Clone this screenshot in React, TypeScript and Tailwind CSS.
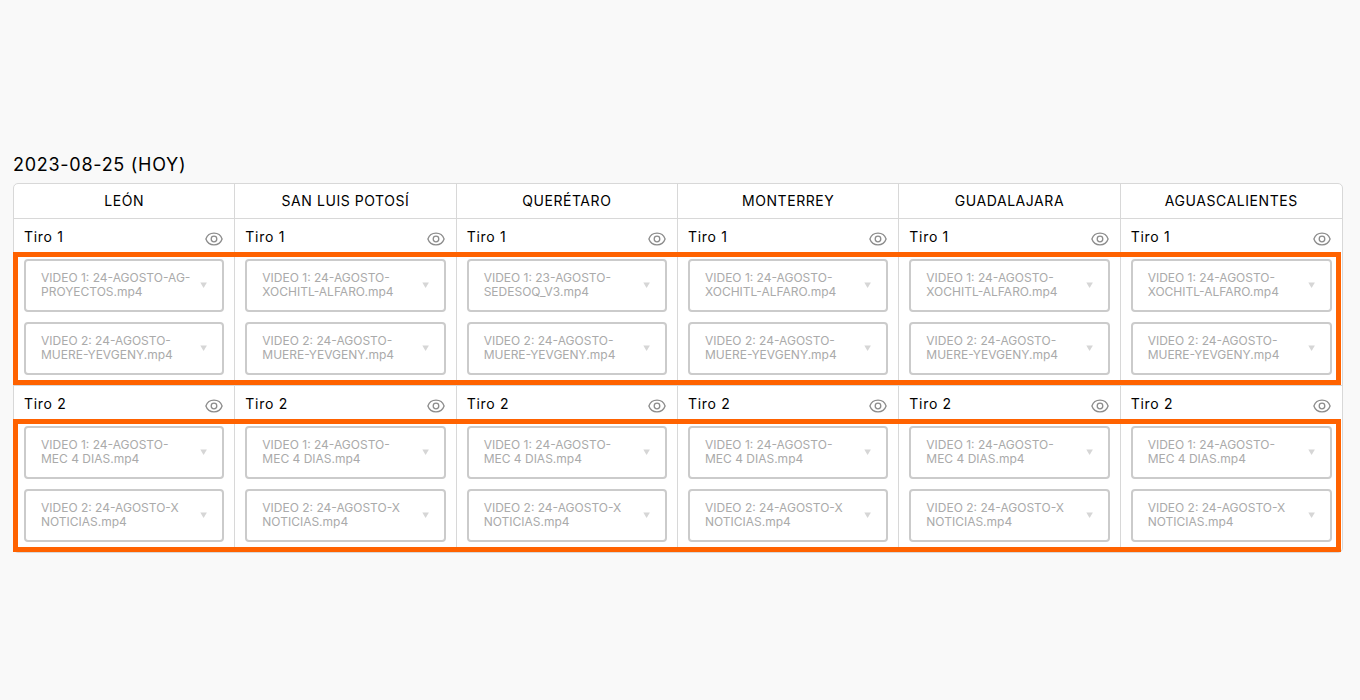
interface Shot {
  name: string;
  videos: string[][];
}

const cities = [
  "LEÓN",
  "SAN LUIS POTOSÍ",
  "QUERÉTARO",
  "MONTERREY",
  "GUADALAJARA",
  "AGUASCALIENTES",
];

const yevgeny = "VIDEO 2: 24-AGOSTO-MUERE-YEVGENY.mp4";
const alfaro = "VIDEO 1: 24-AGOSTO-XOCHITL-ALFARO.mp4";

const shots: Shot[] = [
  {
    name: "Tiro 1",
    videos: [
      ["VIDEO 1: 24-AGOSTO-AG-PROYECTOS.mp4", yevgeny],
      [alfaro, yevgeny],
      ["VIDEO 1: 23-AGOSTO-SEDESOQ_V3.mp4", yevgeny],
      [alfaro, yevgeny],
      [alfaro, yevgeny],
      [alfaro, yevgeny],
    ],
  },
  {
    name: "Tiro 2",
    videos: cities.map(() => [
      "VIDEO 1: 24-AGOSTO-MEC 4 DIAS.mp4",
      "VIDEO 2: 24-AGOSTO-X NOTICIAS.mp4",
    ]),
  },
];

function EyeIcon() {
  return (
    <svg
      className="h-[14px] w-[18px]"
      viewBox="0 0 18 14"
      fill="none"
      stroke="#8c8c8c"
      strokeWidth="1.3"
    >
      <path d="M0.9 7C2.2 3.2 5.2 1.1 9 1.1S15.8 3.2 17.1 7C15.8 10.8 12.8 12.9 9 12.9S2.2 10.8 0.9 7Z" />
      <circle cx="9" cy="7" r="2.8" />
    </svg>
  );
}

function VideoButton({ title }: { title: string }) {
  return (
    <button
      type="button"
      className="flex min-h-[53px] w-full items-center justify-between gap-2 rounded border-2 border-[#cbcbcb] bg-white px-[15px] pb-[2px] text-left text-xs leading-[14px] text-[#aaaaaa]"
    >
      <span>{title}</span>
      <svg className="h-[6px] w-[7px] shrink-0" viewBox="0 0 7 6" fill="#d6d6d6">
        <path d="M0.3 0.5H6.9L3.6 5.9Z" />
      </svg>
    </button>
  );
}

function ShotRow({ shot }: { shot: Shot }) {
  return (
    <tr className="relative">
      {shot.videos.map((videos, i) => (
        <td
          key={cities[i]}
          className="border-t border-r border-[#d8d8d8] px-[10px] pb-[10px] align-top last:border-r-0"
        >
          <div className="flex h-10 items-center justify-between pr-px">
            <span className="pb-[5px] text-sm tracking-wider">{shot.name}</span>
            <button type="button" aria-label={`Ver ${shot.name}`}>
              <EyeIcon />
            </button>
          </div>
          <div className="flex flex-col gap-[10px]">
            {videos.map((title) => (
              <VideoButton key={title} title={title} />
            ))}
          </div>
          {/* frame around the videos of the whole row */}
          {i === 0 && (
            <div className="pointer-events-none absolute top-[34px] right-px bottom-0 -left-px border-5 border-[#ff6200]" />
          )}
        </td>
      ))}
    </tr>
  );
}

function App() {
  return (
    <main className="flex min-h-screen flex-col justify-center bg-[#f9f9f9] pr-[17px] pl-[13px] font-['Inter',sans-serif] text-black">
      <h1 className="pt-[2px] pb-[2px] text-lg leading-8 tracking-[0.04em]">
        2023-08-25 (HOY)
      </h1>
      <table className="w-full table-fixed border-separate border-spacing-0 rounded-[5px] border border-[#d8d8d8] bg-white">
        <thead>
          <tr>
            {cities.map((city) => (
              <th
                key={city}
                className="h-[34px] border-r border-[#d8d8d8] text-sm font-normal tracking-[0.04em] last:border-r-0"
              >
                {city}
              </th>
            ))}
          </tr>
        </thead>
        <tbody>
          {shots.map((shot) => (
            <ShotRow key={shot.name} shot={shot} />
          ))}
        </tbody>
      </table>
    </main>
  );
}

export default App;
